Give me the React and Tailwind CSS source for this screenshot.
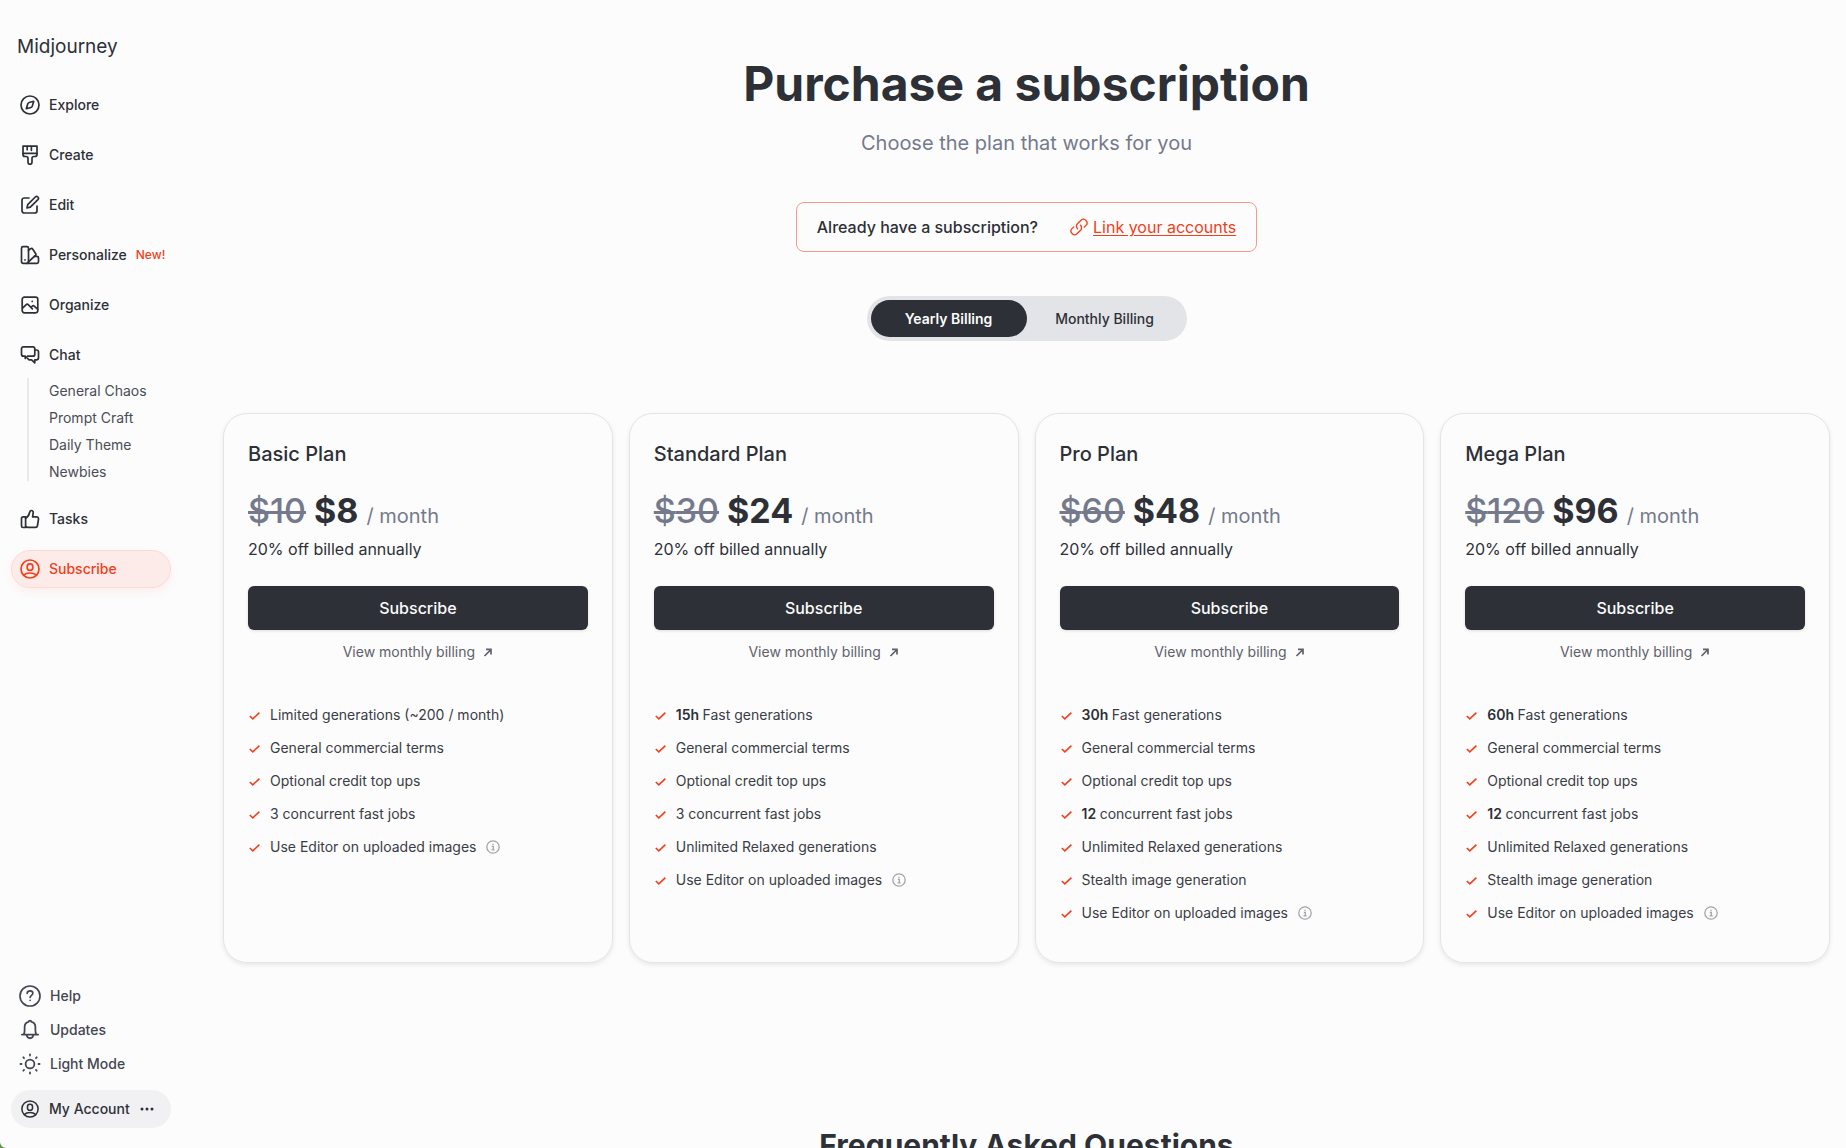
import { useState } from 'react';
import clsx from 'clsx';

const Icon = ({ children, className = 'size-5', stroke = 1.7 }) => (
  <svg
    viewBox="0 0 20 20"
    fill="none"
    stroke="currentColor"
    strokeWidth={stroke}
    strokeLinecap="round"
    strokeLinejoin="round"
    className={clsx('shrink-0', className)}
    aria-hidden="true"
  >
    {children}
  </svg>
);

const CompassIcon = () => (
  <Icon>
    <circle cx="10" cy="10" r="9" />
    <path d="M13.7 6.3 9.2 7.5a2 2 0 0 0-1.4 1.3l-1.5 4.9 4.6-1.2a2 2 0 0 0 1.4-1.4Z" />
  </Icon>
);

const BrushIcon = () => (
  <Icon>
    <path d="M3 1.2h14v8.3a2 2 0 0 1-2 2h-1a2 2 0 0 0-2 2v3.8a2 2 0 0 1-4 0v-3.8a2 2 0 0 0-2-2H5a2 2 0 0 1-2-2Z" />
    <path d="M3 8.3h14M7.2 1.5v3.2M11.4 1.5v3.8" />
  </Icon>
);

const EditIcon = () => (
  <Icon>
    <path d="M9 3H4.3A2.3 2.3 0 0 0 2 5.3v10.4A2.3 2.3 0 0 0 4.3 18h10.4a2.3 2.3 0 0 0 2.3-2.3V11" />
    <path d="m7 13 .7-3.4 7.6-7.6a1.8 1.8 0 0 1 2.6 2.6l-7.6 7.6Z" />
  </Icon>
);

const SwatchIcon = () => (
  <Icon>
    <rect x="1.5" y="1.6" width="7" height="16.8" rx="1.6" />
    <path d="m8.5 5.2 2.1-1.4a1.6 1.6 0 0 1 2.2.5l2.8 4.2a1.6 1.6 0 0 1-.4 2.2L8.3 17" />
    <path d="M14.2 11.4h2.7a1.6 1.6 0 0 1 1.6 1.6v3.8a1.6 1.6 0 0 1-1.6 1.6H7M5 14.9v.1" />
  </Icon>
);

const GalleryIcon = () => (
  <Icon>
    <rect x="2.2" y="2.2" width="15.6" height="15.6" rx="2.2" />
    <path d="m2.6 13.2 3.6-3.6a1.4 1.4 0 0 1 2 0l4.2 4.2M11 12.2l1.3-1.1a1.4 1.4 0 0 1 1.9 0l3.3 3M12.2 6.3v.2" />
  </Icon>
);

const ChatIcon = () => (
  <Icon>
    <path d="M3.5 1.8h9.3a2 2 0 0 1 2 2v5.4a2 2 0 0 1-2 2H7.6l-2.4 2.3v-2.3H3.5a2 2 0 0 1-2-2V3.8a2 2 0 0 1 2-2Z" />
    <path d="M15 5h1.5a2 2 0 0 1 2 2v5.8a2 2 0 0 1-2 2h-1.7v3l-3.2-3H9.2l-1.7-1.5" />
  </Icon>
);

const ThumbIcon = () => (
  <Icon>
    <path d="M1.5 9.3A1.5 1.5 0 0 1 3 7.8h2.6v10.7H3A1.5 1.5 0 0 1 1.5 17Z" />
    <path d="M5.6 9.2C8 8 9.100 6 9.700 3.300 10 2 10.400 1.500 11.300 1.500c1.300 0 2.100 1 1.900 2.400l-.6 3.900h3.900a2 2 0 0 1 2 2.300l-1 6.400a2.200 2.200 0 0 1-2.200 1.900H8c-1 0-1.700-.3-2.400-.9" />
  </Icon>
);

const UserIcon = ({ className }) => (
  <Icon className={className}>
    <circle cx="10" cy="10" r="9" />
    <rect x="7.2" y="4.8" width="5.6" height="6.6" rx="2.6" />
    <path d="M3.6 16.2C5.2 14.7 7.400 14 10 14s4.800.7 6.400 2.200" />
  </Icon>
);

const HelpIcon = () => (
  <Icon className="size-[22px]" stroke={1.5}>
    <circle cx="10" cy="10" r="9.1" />
    <path d="M7.4 7.6c.1-1.500 1.200-2.300 2.600-2.300s2.600.9 2.600 2.200c0 1.800-2.500 1.900-2.500 3.800M10.100 13.900v.1" />
  </Icon>
);

const BellIcon = () => (
  <Icon className="size-[22px]" stroke={1.6}>
    <path d="M2.600 14.200h14.800M4.300 14c.6-1 .8-2.200.8-3.800V7.600C5.100 4.600 7.200 3 8.700 2.700c.2-1.600 2.400-1.600 2.600 0 1.500.3 3.600 1.900 3.600 4.900v2.600c0 1.600.2 2.800.8 3.800" />
    <path d="M7 14.500c.2 1.800 1.400 3 3 3s2.800-1.200 3-3" />
  </Icon>
);

const SunIcon = () => (
  <Icon className="size-[22px]" stroke={1.6}>
    <circle cx="10" cy="10" r="4" />
    <path d="M10 1.300v1M10 17.700v1M1.300 10h1M17.700 10h1M3.900 3.900l.7.7M15.400 15.400l.7.7M3.900 16.100l.7-.7M15.400 4.600l.7-.7" />
  </Icon>
);

const LinkIcon = () => (
  <Icon className="size-[18px]" stroke={1.5}>
    <path d="M8.3 11.9a4 4 0 0 1 .2-5.800l3.700-3.600a4 4 0 0 1 5.600 5.700l-2 1.900" />
    <path d="M11.700 8.100a4 4 0 0 1-.2 5.800l-3.700 3.600a4 4 0 0 1-5.600-5.700l2-1.900" />
  </Icon>
);

const CheckIcon = () => (
  <svg viewBox="0 0 12 12" className="size-3 shrink-0 text-[#f0401c]" fill="none" stroke="currentColor" strokeWidth="1.600" aria-hidden="true">
    <path d="m1.800 7 3 2.900L11.400 3.600" />
  </svg>
);

const ArrowIcon = () => (
  <svg viewBox="0 0 10 10" className="size-[10px]" fill="none" stroke="currentColor" strokeWidth="1.700" aria-hidden="true">
    <path d="M1.500 9 8 2.500M3 2.400h5v5.100" />
  </svg>
);

const InfoIcon = () => (
  <svg viewBox="0 0 14 14" className="size-[14px] shrink-0 text-[#a3a5ab]" fill="none" stroke="currentColor" strokeWidth="1.300" aria-hidden="true">
    <circle cx="7" cy="7" r="6.200" />
    <path d="M5.800 6.300h1.500v3.500M5.600 9.900h3M7 3.800v1.200" />
  </svg>
);

const mainLinks = [
  { label: 'Explore', icon: CompassIcon },
  { label: 'Create', icon: BrushIcon },
  { label: 'Edit', icon: EditIcon },
  { label: 'Personalize', icon: SwatchIcon, badge: 'New!' },
  { label: 'Organize', icon: GalleryIcon },
  { label: 'Chat', icon: ChatIcon },
];

const rooms = ['General Chaos', 'Prompt Craft', 'Daily Theme', 'Newbies'];

const footerLinks = [
  { label: 'Help', icon: HelpIcon },
  { label: 'Updates', icon: BellIcon },
  { label: 'Light Mode', icon: SunIcon },
];

const editor = { text: 'Use Editor on uploaded images', info: true };
const common = [{ text: 'General commercial terms' }, { text: 'Optional credit top ups' }];

const plans = [
  {
    name: 'Basic Plan',
    full: 10,
    price: 8,
    features: [{ text: 'Limited generations (~200 / month)' }, ...common, { text: '3 concurrent fast jobs' }, editor],
  },
  {
    name: 'Standard Plan',
    full: 30,
    price: 24,
    features: [
      { strong: '15h', text: 'Fast generations' },
      ...common,
      { text: '3 concurrent fast jobs' },
      { text: 'Unlimited Relaxed generations' },
      editor,
    ],
  },
  {
    name: 'Pro Plan',
    full: 60,
    price: 48,
    features: [
      { strong: '30h', text: 'Fast generations' },
      ...common,
      { strong: '12', text: 'concurrent fast jobs' },
      { text: 'Unlimited Relaxed generations' },
      { text: 'Stealth image generation' },
      editor,
    ],
  },
  {
    name: 'Mega Plan',
    full: 120,
    price: 96,
    features: [
      { strong: '60h', text: 'Fast generations' },
      ...common,
      { strong: '12', text: 'concurrent fast jobs' },
      { text: 'Unlimited Relaxed generations' },
      { text: 'Stealth image generation' },
      editor,
    ],
  },
];

const NavItem = ({ label, icon: ItemIcon, badge, active }) => (
  <a
    href="#"
    className={clsx(
      'flex h-[38px] items-center gap-[9px] rounded-full border px-2 text-sm font-medium',
      active
        ? 'border-[#fbdad4] bg-[#fdebe9] text-[#f0401c] shadow-[0_4px_10px_rgba(240,64,28,0.07)]'
        : 'border-transparent'
    )}
  >
    <ItemIcon />
    {label}
    {badge && <span className="text-xs font-medium text-[#f0401c]">{badge}</span>}
  </a>
);

const Sidebar = () => (
  <aside className="flex w-[207px] shrink-0 flex-col pr-9 pb-5 pl-[11px]">
    <a href="#" className="mt-[33px] px-[6px] text-[19px] leading-7">
      Midjourney
    </a>
    <nav className="mt-[25px] flex flex-col gap-3">
      {mainLinks.map((link) => (
        <NavItem key={link.label} {...link} />
      ))}
      <ul className="-mt-2 mb-[7px] ml-4 flex flex-col gap-[9px] border-l-2 border-[#e9e9eb] pt-1 text-sm text-[#4a4d57]">
        {rooms.map((room) => (
          <li key={room}>
            <a href="#" className="block pl-5 leading-[18px]">
              {room}
            </a>
          </li>
        ))}
      </ul>
      <NavItem label="Tasks" icon={ThumbIcon} />
      <NavItem label="Subscribe" icon={UserIcon} active />
    </nav>
    <div className="mt-auto">
      {footerLinks.map(({ label, icon: ItemIcon }) => (
        <button key={label} type="button" className="flex h-[34px] items-center gap-[9px] px-2 text-sm font-medium text-[#434651]">
          <ItemIcon />
          {label}
        </button>
      ))}
      <button
        type="button"
        className="mt-[9px] flex h-[38px] w-full items-center gap-[10px] rounded-full bg-[#f1f1f3] px-[10px] text-sm font-medium"
      >
        <UserIcon className="size-[18px]" />
        My Account
        <svg viewBox="0 0 14 4" className="w-[14px]" fill="currentColor" aria-hidden="true">
          <circle cx="2" cy="2" r="1.500" />
          <circle cx="7" cy="2" r="1.500" />
          <circle cx="12" cy="2" r="1.500" />
        </svg>
      </button>
    </div>
  </aside>
);

const PlanCard = ({ name, full, price, features }) => (
  <section className="rounded-[24px] border border-[#e3e4e8] px-6 pt-6 pb-[33px] shadow-[0_2px_4px_rgba(45,48,55,0.1)]">
    <h2 className="text-xl leading-8 font-medium">{name}</h2>
    <p className="mt-[21px] flex items-baseline gap-2 text-[34px] leading-10">
      <s className="font-medium text-[#747a8c] decoration-[3px]">${full}</s>
      <b>${price}</b>
      <span className="text-xl text-[#747a8c]">/ month</span>
    </p>
    <p className="mt-1 leading-7">20% off billed annually</p>
    <button
      type="button"
      className="mt-[23px] h-11 w-full rounded-md bg-[#2d3037] font-medium text-[#fcfcfc] shadow-[0_1px_3px_rgba(45,48,55,0.15)]"
    >
      Subscribe
    </button>
    <a href="#" className="mt-3 flex items-center justify-center gap-2 text-sm text-[#5e616b]">
      View monthly billing
      <ArrowIcon />
    </a>
    <ul className="mt-9 flex flex-col text-sm leading-[33px]">
      {features.map(({ strong, text, info }) => (
        <li key={text} className="flex items-center gap-[10px]">
          <CheckIcon />
          <span className="text-[#3a3d46]">
            {strong && <b className="font-semibold text-[#2d3037]">{strong} </b>}
            {text}
          </span>
          {info && <InfoIcon />}
        </li>
      ))}
    </ul>
  </section>
);

const BillingToggle = () => {
  const [billing, setBilling] = useState('Yearly');
  return (
    <div className="mt-[44px] flex h-[45px] rounded-full bg-[#e3e4e8] p-1">
      {['Yearly', 'Monthly'].map((option) => (
        <button
          key={option}
          type="button"
          onClick={() => setBilling(option)}
          className={clsx(
            'w-[156px] rounded-full text-sm',
            billing === option ? 'bg-[#2d3037] font-semibold text-[#fcfcfc]' : 'font-medium'
          )}
        >
          {option} Billing
        </button>
      ))}
    </div>
  );
};

export default function App() {
  return (
    <div className="flex h-screen bg-[#fcfcfc] font-['Inter',sans-serif] text-[#2d3037]">
      <Sidebar />
      <main className="min-w-0 flex-1 overflow-y-auto [scrollbar-width:none]">
        <div className="flex flex-col items-center px-4 pb-16">
          <h1 className="mt-[54px] text-5xl leading-[60px] font-bold">Purchase a subscription</h1>
          <p className="mt-[13px] text-xl leading-8 text-[#747a8c]">Choose the plan that works for you</p>
          <div className="mt-[43px] flex h-[50px] items-center gap-8 rounded-lg border border-[#f79a89] px-5">
            <span className="font-medium">Already have a subscription?</span>
            <a href="#" className="flex items-center gap-[5px] text-[#f0401c]">
              <LinkIcon />
              <span className="underline underline-offset-2">Link your accounts</span>
            </a>
          </div>
          <BillingToggle />
          <div className="mt-[72px] grid w-full grid-cols-4 gap-4">
            {plans.map((plan) => (
              <PlanCard key={plan.name} {...plan} />
            ))}
          </div>
          <h2 className="mt-[162px] text-3xl leading-10 font-bold">Frequently Asked Questions</h2>
        </div>
      </main>
      {/* desktop peeking out behind the rounded window corner */}
      <svg viewBox="0 0 6 6" className="absolute bottom-0 left-0 size-[6px]" fill="#5c9140" aria-hidden="true">
        <path d="M0 0a6 6 0 0 0 6 6H0Z" />
      </svg>
    </div>
  );
}
